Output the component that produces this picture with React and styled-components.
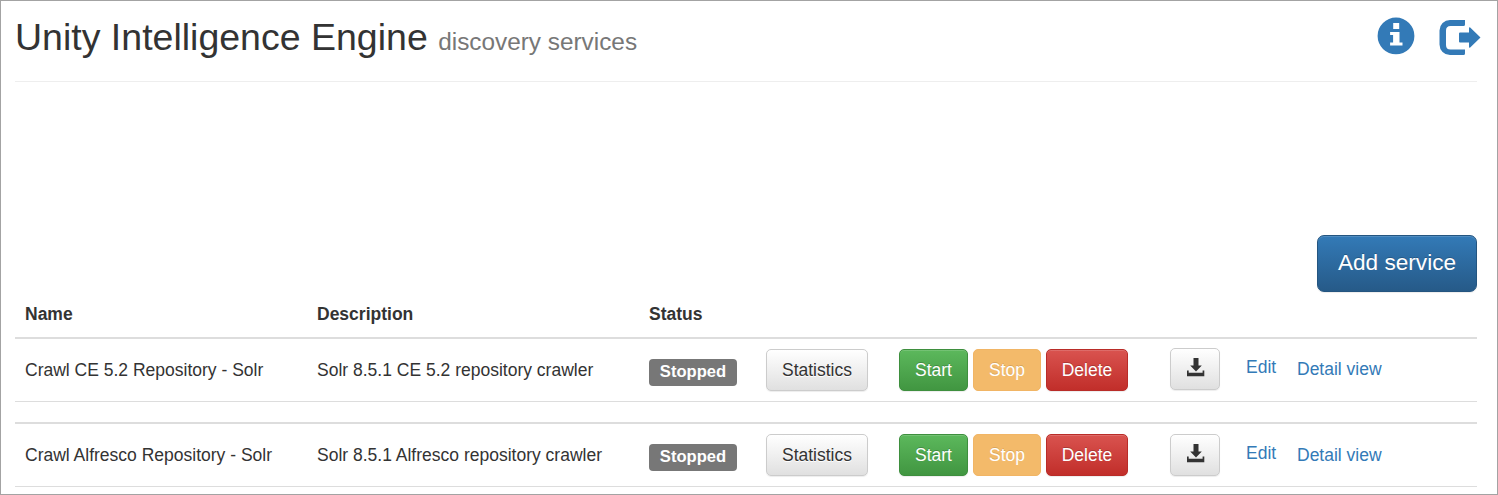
import React from 'react';
import styled, { createGlobalStyle, css } from 'styled-components';

const GlobalStyle = createGlobalStyle`
  *, *::before, *::after { box-sizing: border-box; }
  body {
    margin: 0;
    background: #fff;
    color: #333;
    font-family: "Liberation Sans", Arial, sans-serif;
    font-size: 17.5px;
    line-height: 24px;
  }
`;

const Page = styled.main`
  width: 100%;
  height: 495px;
  padding: 0 20px 0 14px;
  border: 1px solid #a3a3a3;
  overflow: hidden;
`;

const Header = styled.header`
  display: flex;
  justify-content: space-between;
  height: 81px;
  border-bottom: 1px solid #eee;
`;

const Title = styled.h1`
  margin: 14px 0 0;
  font-size: 37.5px;
  font-weight: 400;
  line-height: 44px;
  white-space: nowrap;
`;

const Subtitle = styled.small`
  color: #777;
  font-size: 24.35px;
`;

const HeaderActions = styled.nav`
  display: flex;
  gap: 23px;
  margin: 15px -4px 0 0;
`;

const IconLink = styled.a`
  display: block;
  height: 40px;
  color: #337ab7;
  svg { display: block; fill: currentColor; }
`;

const Toolbar = styled.div`
  display: flex;
  justify-content: flex-end;
  padding-top: 153px;
`;

const variants = {
  primary: css`
    border-color: #245580;
    background: linear-gradient(#337ab7, #265a88);
    color: #fff;
    text-shadow: 0 -1px 0 rgba(0, 0, 0, 0.2);
  `,
  plain: css`
    border-color: #ccc;
    background: linear-gradient(#fff, #e0e0e0);
    color: #333;
    text-shadow: 0 1px 0 #fff;
  `,
  success: css`
    border-color: #3e8f3e;
    background: linear-gradient(#5cb85c, #419641);
    color: #fff;
    text-shadow: 0 -1px 0 rgba(0, 0, 0, 0.2);
  `,
  warning: css`
    border-color: #f1b565;
    background: #f3ba6a;
    color: #fff;
    text-shadow: 0 -1px 0 rgba(0, 0, 0, 0.12);
    box-shadow: none;
  `,
  danger: css`
    border-color: #b92c28;
    background: linear-gradient(#d9534f, #c12e2a);
    color: #fff;
    text-shadow: 0 -1px 0 rgba(0, 0, 0, 0.2);
  `,
};

const Button = styled.button`
  display: flex;
  align-items: center;
  justify-content: center;
  flex: none;
  width: ${(p) => p.$width}px;
  height: 42px;
  padding: 0;
  border: 1px solid;
  border-radius: 5px;
  font: inherit;
  white-space: nowrap;
  box-shadow: inset 0 1px 0 rgba(255, 255, 255, 0.15), 0 1px 1px rgba(0, 0, 0, 0.075);
  ${(p) => variants[p.$variant]}
`;

const DownloadButton = styled(Button)`
  padding: 0 0 4px 2px;
`;

const AddButton = styled(Button)`
  height: 57px;
  padding-bottom: 1px;
  border-radius: 7px;
  font-size: 22.6px;
`;

const columns = css`
  display: grid;
  grid-template-columns: 292px 332px 117px 133px 271px 76px 51px 1fr;
  padding-left: 10px;
`;

const TableHead = styled.div`
  ${columns}
  height: 45px;
  padding-top: 10px;
  font-weight: 700;
`;

const Row = styled.div`
  ${columns}
  height: 65px;
  margin-bottom: 20px;
  border-top: 2px solid #ddd;
  border-bottom: 1px solid #ddd;
`;

const Cell = styled.div`
  padding-top: ${(p) => p.$top}px;
  white-space: nowrap;
`;

const ButtonGroup = styled.div`
  display: flex;
  gap: 5px;
`;

const Badge = styled.span`
  display: block;
  width: 88px;
  height: 27px;
  border-radius: 4px;
  background: #777;
  color: #fff;
  font-weight: 700;
  font-size: 16.6px;
  line-height: 25px;
  text-align: center;
`;

const TextLink = styled.a`
  color: #337ab7;
`;

const InfoIcon = () => (
  <svg width="38" height="40" viewBox="0 0 38 40">
    <path
      fillRule="evenodd"
      d="M19 1.500a18.400 18.400 0 1 1 0 36.800a18.400 18.400 0 0 1 0-36.800zM16.200 7v6h6v-6zM13.100 16v3h3v7.600h-3v3h12.400v-3h-3v-10.600z"
    />
  </svg>
);

const LogoutIcon = () => (
  <svg width="43" height="40" viewBox="0 0 43 40">
    <path d="M26.500 4H12A10.500 10.500 0 0 0 1.500 14.500V28.500A10.500 10.500 0 0 0 12 39H25.500Q27 39 27 37.500V33.500H12.500Q8 33.500 8 29V14.500Q8 10 12.500 10H25.500Q27 10 27 8.500V4z" />
    <path d="M22 16.500H31V12Q31.200 10.700 32.200 11.500L42.500 21.500L32.200 31.500Q31.200 32.200 31 31V26.500H22Q21 26.500 21 25.500V17.500Q21 16.500 22 16.500z" />
  </svg>
);

const SaveIcon = () => (
  <svg width="18" height="19" viewBox="0 0 18 19" fill="#333">
    <path d="M6.500 0h5v7.500h3.300L9 13.500L3.200 7.500h3.300zM0 12.500h1.700v2.300h13.900v-2.300h1.700v5.700H0z" />
  </svg>
);

const services = [
  { name: 'Crawl CE 5.2 Repository - Solr', description: 'Solr 8.5.1 CE 5.2 repository crawler', offset: 0 },
  { name: 'Crawl Alfresco Repository - Solr', description: 'Solr 8.5.1 Alfresco repository crawler', offset: 1 },
];

const ServiceRow = ({ service }) => (
  <Row>
    <Cell $top={19}>{service.name}</Cell>
    <Cell $top={19}>{service.description}</Cell>
    <Cell $top={20}><Badge>Stopped</Badge></Cell>
    <Cell $top={10}><Button $variant="plain" $width={102}>Statistics</Button></Cell>
    <Cell $top={10}>
      <ButtonGroup>
        <Button $variant="success" $width={69}>Start</Button>
        <Button $variant="warning" $width={68} disabled>Stop</Button>
        <Button $variant="danger" $width={82}>Delete</Button>
      </ButtonGroup>
    </Cell>
    <Cell $top={9 + service.offset}>
      <DownloadButton $variant="plain" $width={50} aria-label="Download"><SaveIcon /></DownloadButton>
    </Cell>
    <Cell $top={16 + service.offset}><TextLink>Edit</TextLink></Cell>
    <Cell $top={18 + service.offset}><TextLink>Detail view</TextLink></Cell>
  </Row>
);

export default function App() {
  return (
    <>
      <GlobalStyle />
      <Page>
        <Header>
          <Title>Unity Intelligence Engine <Subtitle>discovery services</Subtitle></Title>
          <HeaderActions>
            <IconLink aria-label="Information"><InfoIcon /></IconLink>
            <IconLink aria-label="Sign out"><LogoutIcon /></IconLink>
          </HeaderActions>
        </Header>
        <Toolbar>
          <AddButton $variant="primary" $width={160}>Add service</AddButton>
        </Toolbar>
        <TableHead>
          <span>Name</span>
          <span>Description</span>
          <span>Status</span>
        </TableHead>
        {services.map((s) => <ServiceRow key={s.name} service={s} />)}
      </Page>
    </>
  );
}
